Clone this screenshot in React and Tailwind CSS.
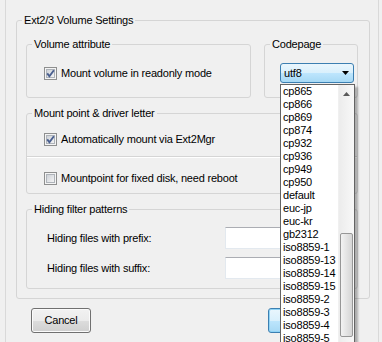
import { useId } from 'react';

const codepages = [
  'cp865', 'cp866', 'cp869', 'cp874', 'cp932', 'cp936', 'cp949', 'cp950',
  'default', 'euc-jp', 'euc-kr', 'gb2312', 'iso8859-1', 'iso8859-13',
  'iso8859-14', 'iso8859-15', 'iso8859-2', 'iso8859-3', 'iso8859-4', 'iso8859-5',
];

// Vista style etched group box
function GroupBox({ title, className = '', children }) {
  return (
    <fieldset className={`border border-[#d5d5d5] rounded-[3px] ${className}`}>
      <legend className="ml-[5px] px-[2px] leading-[13px]">{title}</legend>
      {children}
    </fieldset>
  );
}

function CheckBox({ checked }) {
  const id = useId();
  return (
    <svg width="13" height="13" viewBox="0 0 13 13" className="shrink-0">
      <defs>
        <linearGradient id={id} x1="0" y1="0" x2="1" y2="1">
          <stop offset="0" stopColor="#cbcfd5" />
          <stop offset="1" stopColor="#f6f6f6" />
        </linearGradient>
      </defs>
      <rect x="0.5" y="0.5" width="12" height="12" fill="#f4f4f4" stroke="#8e8f8f" />
      <rect x="2.5" y="2.5" width="8" height="8" fill={`url(#${id})`} stroke="#aeb3b9" />
      {checked && (
        <path d="M3.2 6.4 L5.4 9.2 L9.9 3.2" fill="none" stroke="#4a5f8f" strokeWidth="1.9" />
      )}
    </svg>
  );
}

function Check({ checked, label }) {
  return (
    <div className="flex items-center gap-[4px] h-[13px] leading-[13px]">
      <CheckBox checked={checked} />
      <span>{label}</span>
    </div>
  );
}

function TextInput() {
  return (
    <div className="w-[115px] h-[22px] bg-white border border-[#e3e9ef] border-t-[#abadb3]" />
  );
}

function Button({ children, primary }) {
  const look = primary
    ? 'border-[#3c7fb1] shadow-[inset_0_0_0_1px_#8fd3f6] bg-[linear-gradient(to_bottom,#eaf6fd_0%,#d9f0fc_50%,#bee6fd_50%,#a7d9f5_100%)]'
    : 'border-[#707070] shadow-[inset_0_0_0_1px_#fbfbfb] bg-[linear-gradient(to_bottom,#f2f2f2_0%,#ebebeb_50%,#dddddd_50%,#cfcfcf_100%)]';
  return (
    <button className={`w-[60px] h-[25px] rounded-[3px] border flex items-center justify-center ${look}`}>
      {children}
    </button>
  );
}

function DropList() {
  return (
    <div className="absolute left-[280px] top-[84px] w-[75px] h-[264px] bg-white border border-[#646464] shadow-[3px_3px_2px_rgba(0,0,0,0.28)] flex">
      <div className="flex-1 flex flex-col">
        {codepages.map((cp) => (
          <div key={cp} className="h-[13px] leading-[13px] pl-[2px] whitespace-nowrap">
            {cp}
          </div>
        ))}
      </div>
      {/* scrollbar */}
      <div className="w-[16px] flex flex-col bg-[linear-gradient(to_right,#ececec,#f8f8f8)] border-l border-[#f0f0f0]">
        <div className="h-[17px] flex items-center justify-center">
          <svg width="7" height="4" viewBox="0 0 7 4">
            <path d="M0 4 L3.5 0 L7 4 Z" fill="#5a5a5a" />
          </svg>
        </div>
        <div className="h-[131px]" />
        <div className="h-[104px] mx-[1px] rounded-[2px] border border-[#979797] bg-[linear-gradient(to_right,#f3f3f3,#e4e4e4_50%,#d5d5d5)]" />
        <div className="h-[10px] flex items-end justify-center">
          <svg width="7" height="4" viewBox="0 0 7 4">
            <path d="M0 0 L7 0 L3.5 4 Z" fill="#5a5a5a" />
          </svg>
        </div>
      </div>
    </div>
  );
}

export default function App() {
  return (
    <div className="relative w-[382px] h-[342px] overflow-hidden bg-[#f0f0f0] text-black text-[11px] tracking-[-0.2px] font-['Liberation_Sans',Arial,sans-serif]">
      <div className="ml-[5px] w-[374px] h-full border-x border-[#d9d9d9] pt-[14px] flex flex-col">
        <GroupBox title="Ext2/3 Volume Settings" className="ml-[10px] w-[354px] h-[285px]">
          <div className="flex flex-col gap-[9px] pl-[9px] pr-[11px] pt-[11px]">
            <div className="flex gap-[13px] h-[60px]">
              <GroupBox title="Volume attribute" className="w-[225px] h-full">
                <div className="pl-[17px] pt-[16px]">
                  <Check checked label="Mount volume in readonly mode" />
                </div>
              </GroupBox>
              <GroupBox title="Codepage" className="w-[94px] h-full">
                <div className="pl-[15px] pt-[12px]">
                  <div className="w-[74px] h-[20px] rounded-[3px] border border-[#3c7fb1] bg-[linear-gradient(to_bottom,#eaf6fd_0%,#d9f0fc_50%,#bee6fd_50%,#a7d9f5_100%)] flex items-center justify-between pl-[3px] pr-[4px]">
                    <span className="leading-[13px]">utf8</span>
                    <svg width="7" height="4" viewBox="0 0 7 4">
                      <path d="M0 0 L7 0 L3.5 4 Z" fill="#000" />
                    </svg>
                  </div>
                </div>
              </GroupBox>
            </div>

            <GroupBox title="Mount point & driver letter" className="h-[87px]">
              <div className="pl-[17px] pt-[13px] pb-[10px] border-b border-[#d5d5d5]">
                <Check checked label="Automatically mount via Ext2Mgr" />
              </div>
              <div className="pl-[17px] pt-[14px] border-t border-white">
                <Check label="Mountpoint for fixed disk, need reboot" />
              </div>
            </GroupBox>

            <GroupBox title="Hiding filter patterns" className="h-[86px]">
              <div className="flex flex-col gap-[8px] pt-[11px] pl-[20px]">
                <div className="flex items-center">
                  <span className="w-[178px]">Hiding files with prefix:</span>
                  <TextInput />
                </div>
                <div className="flex items-center">
                  <span className="w-[178px]">Hiding files with suffix:</span>
                  <TextInput />
                </div>
              </div>
            </GroupBox>
          </div>
        </GroupBox>

        <div className="flex mt-[9px]">
          <div className="ml-[25px]">
            <Button>Cancel</Button>
          </div>
          {/* default button, its label is hidden behind the open list */}
          <div className="ml-[177px]">
            <Button primary />
          </div>
        </div>
      </div>

      <DropList />
    </div>
  );
}
